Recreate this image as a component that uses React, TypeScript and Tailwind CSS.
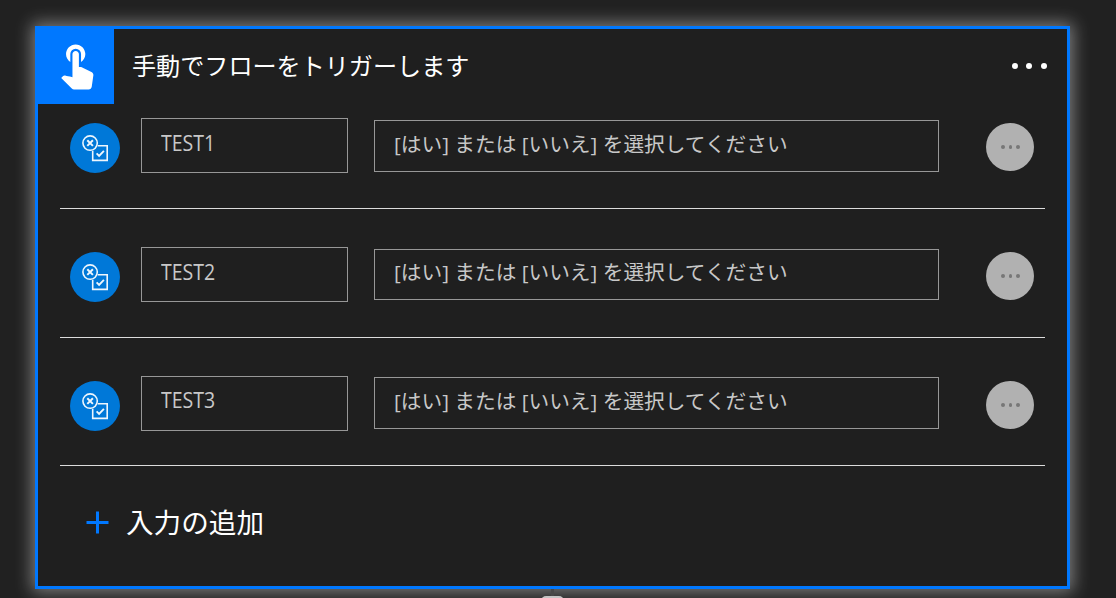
import React from 'react';
import { MdTouchApp } from 'react-icons/md';

// ============================================================
// Types
// ============================================================

interface TriggerInput {
  id: string;
  name: string;
  placeholder: string;
  rowClass: string;
  nameClass: string;
  valueClass: string;
}

const PLACEHOLDER = '[はい] または [いいえ] を選択してください';

const inputs: TriggerInput[] = [
  { id: 'in-1', name: 'TEST1', placeholder: PLACEHOLDER, rowClass: 'h-[105px] pt-3.5', nameClass: 'pt-2.5', valueClass: 'mt-0.5 h-[52px] pt-[9px]' },
  { id: 'in-2', name: 'TEST2', placeholder: PLACEHOLDER, rowClass: 'h-[129px] pt-[38px]', nameClass: 'pt-2.5', valueClass: 'mt-0.5 h-[51px] pt-2' },
  { id: 'in-3', name: 'TEST3', placeholder: PLACEHOLDER, rowClass: 'h-[128px] pt-[38px]', nameClass: 'pt-[9px]', valueClass: 'mt-px h-[52px] pt-[9px]' },
];

// ============================================================
// Icons
// ============================================================

function YesNoIcon() {
  return (
    <svg width="50" height="50" viewBox="0 0 50 50" fill="none" stroke="#eef6fd" strokeWidth="1.6">
      <path d="M27.8 22.7H37.2V37.4H22.7V28" />
      <circle cx="20.1" cy="20.1" r="7.2" />
      <path d="M17.3 17.3l5.6 5.6M22.9 17.3l-5.6 5.6" strokeWidth="2" />
      <path d="M26.6 30.3l2.5 2.5 4.8-5" strokeWidth="1.9" />
    </svg>
  );
}

function Dots({ className, dot }: { className: string; dot: string }) {
  return (
    <span className={`flex items-center ${className}`}>
      <span className={`rounded-full ${dot}`} />
      <span className={`rounded-full ${dot}`} />
      <span className={`rounded-full ${dot}`} />
    </span>
  );
}

// ============================================================
// Input Row
// ============================================================

function InputRow({ input }: { input: TriggerInput }) {
  return (
    <div className={`flex items-start border-b border-[#dcdcdc] pl-2.5 ${input.rowClass}`}>
      <div className="mt-[5px] size-[50px] shrink-0 rounded-full bg-[#0078d8]">
        <YesNoIcon />
      </div>
      <div
        className={`ml-[21px] h-[55px] w-[207px] shrink-0 border border-[#979797] pl-[19px] text-[21px] leading-7 text-[#c8c8c8] ${input.nameClass}`}
      >
        <span className="inline-block origin-left scale-x-[0.93]">{input.name}</span>
      </div>
      <div
        className={`ml-[26px] w-[565px] shrink-0 border border-[#979797] pl-[19px] text-[20.7px] leading-7 whitespace-nowrap text-[#c8c8c8] ${input.valueClass}`}
      >
        {input.placeholder}
      </div>
      <button className="mt-[5px] ml-[47px] flex size-12 shrink-0 items-center justify-center rounded-full bg-[#b1b1b1]">
        <Dots className="gap-1 pl-px" dot="size-[3.5px] bg-[#777777]" />
      </button>
    </div>
  );
}

// ============================================================
// Trigger Card
// ============================================================

export default function App() {
  return (
    <div className="relative h-[598px] w-[1116px] overflow-hidden bg-[#212121] pt-[26px] pl-[35px] font-['Open_Sans','Noto_Sans_CJK_JP',sans-serif]">
      <div className="h-[563px] w-[1035px] border-[3px] border-[#0078ff] bg-[#1f1f1f] shadow-[0_0_16px_3px_rgba(255,255,255,0.42)]">
        <header className="flex h-[75px] items-start">
          <div className="h-[75px] w-[76px] shrink-0 bg-[#0078ff] pt-[9px] pl-[13px]">
            <MdTouchApp className="size-[51.5px] text-white" />
          </div>
          <h1 className="mt-[19px] ml-[18px] text-[24.1px] leading-9 font-normal whitespace-nowrap text-white">
            手動でフローをトリガーします
          </h1>
          <button className="mt-[34px] mr-[20.5px] ml-auto">
            <Dots className="gap-[8.7px]" dot="size-[5.7px] bg-white" />
          </button>
        </header>

        <div className="mr-[22px] ml-[22px]">
          {inputs.map((input) => (
            <InputRow key={input.id} input={input} />
          ))}
        </div>

        <button className="mt-[35px] ml-12 flex h-11 items-center text-[27.6px] text-white">
          <svg className="mb-0.5" width="23" height="23" viewBox="0 0 23 23" stroke="#0078ff" strokeWidth="3">
            <path d="M0.5 11.5h22M11.5 0.5v22" />
          </svg>
          <span className="ml-[17px] whitespace-nowrap">入力の追加</span>
        </button>
      </div>

      {/* Connector to the next step */}
      <div className="absolute top-[589px] left-[541px] flex w-[23px] flex-col items-center">
        <div className="h-[7px] w-[3px] bg-[#484848]" />
        <div className="h-5 w-[23px] rounded-t-[5px] bg-[#c4c4c4]" />
      </div>
    </div>
  );
}
